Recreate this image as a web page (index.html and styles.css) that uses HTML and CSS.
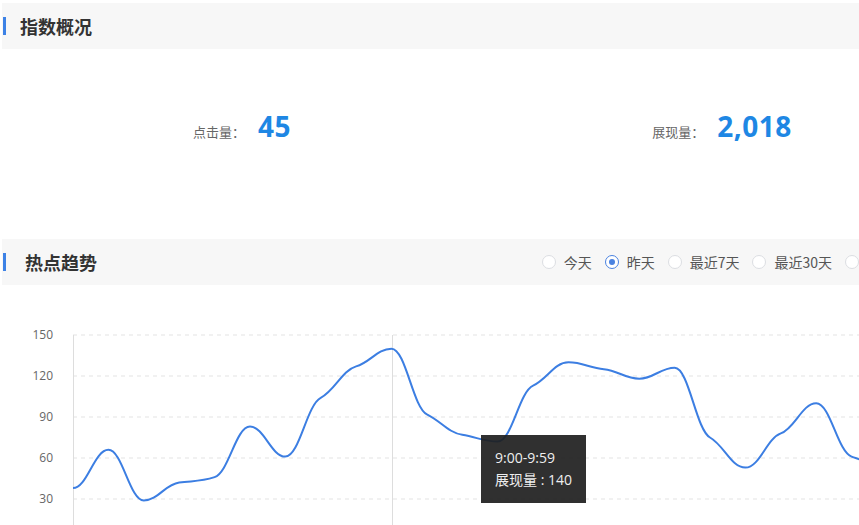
FILE: index.html
```html
<!DOCTYPE html>
<html lang="zh-CN">
<head>
    <meta charset="UTF-8">
    <title>热点数据</title>
    <link rel="stylesheet" href="styles.css">
</head>
<body>
<div id="content">
    <div class="panel-head">
        <h2 class="panel-title">指数概况</h2>
    </div>
    <ul class="stats">
        <li><span class="stat-label">点击量：</span><span class="stat-num">45</span></li>
        <li><span class="stat-label">展现量：</span><span class="stat-num">2,018</span></li>
    </ul>

    <div class="panel-head">
        <h2 class="panel-title title-trend">热点趋势</h2>
        <ul class="range">
            <li><i class="radio"></i>今天</li>
            <li class="on"><i class="radio"></i>昨天</li>
            <li><i class="radio"></i>最近7天</li>
            <li><i class="radio"></i>最近30天</li>
            <li><i class="radio"></i>自定义</li>
        </ul>
    </div>

    <div class="chart">
        <svg id="chart" width="960" height="270">
            <g class="grid">
                <line x1="71" y1="50" x2="885" y2="50"></line>
                <line x1="71" y1="91" x2="885" y2="91"></line>
                <line x1="71" y1="132" x2="885" y2="132"></line>
                <line x1="71" y1="173" x2="885" y2="173"></line>
                <line x1="71" y1="214" x2="885" y2="214"></line>
                <line x1="71" y1="255" x2="885" y2="255"></line>
            </g>
            <g class="axis-label">
                <text x="51" y="54">150</text>
                <text x="51" y="95">120</text>
                <text x="51" y="136">90</text>
                <text x="51" y="177">60</text>
                <text x="51" y="218">30</text>
            </g>
            <line class="axis" x1="71.5" y1="50" x2="71.5" y2="255"></line>
            <line class="cross" x1="390.5" y1="50" x2="390.5" y2="255"></line>
            <path id="line" class="series" d=""></path>
        </svg>
        <div class="tip">
            <p>9:00-9:59</p>
            <p>展现量 : 140</p>
        </div>
    </div>
</div>

<script src="chart.js"></script>
</body>
</html>
```

FILE: styles.css
```css
html,body,ul,p,h2{
    margin: 0;
    padding: 0;
}
html,body{
    overflow: hidden;
    background: #ffffff;
}
body{
    font-family: "Open Sans", "Noto Sans CJK SC", sans-serif;
}
li{
    list-style: none;
}
#content{
    width: 960px;
    margin: 3px 0 0 2px;
}
.panel-head{
    height: 46px;
    background: #f7f7f7;
    display: flex;
    align-items: center;
}
.panel-title{
    display: flex;
    align-items: center;
    font-family: "Noto Sans CJK SC", sans-serif;
    font-size: 18px;
    font-weight: bold;
    color: #333333;
}
.panel-title::before{
    content: "";
    width: 3px;
    height: 18px;
    margin: 0 14px 0 1px;
    background: #3d82e6;
}
.title-trend::before{
    margin-right: 19px;
}

.stats{
    display: flex;
    padding: 61px 0 91px;
}
.stats li{
    width: 50%;
    display: flex;
    justify-content: center;
    align-items: baseline;
    line-height: 32px;
}
.stat-label{
    font-family: "Noto Sans CJK SC", sans-serif;
    font-size: 13px;
    color: #666666;
    margin-right: 13px;
}
.stat-num{
    font-size: 28px;
    font-weight: bold;
    color: #1e87e4;
    letter-spacing: 0.5px;
}

.range{
    margin-left: auto;
    padding-right: 40px;
    display: flex;
    align-items: center;
    font-family: "Noto Sans CJK SC", sans-serif;
    font-size: 14px;
    color: #555555;
}
.range li{
    display: flex;
    align-items: center;
    margin-right: 13px;
}
.radio{
    width: 14px;
    height: 14px;
    box-sizing: border-box;
    border: 1px solid #dcdee2;
    border-radius: 50%;
    background: #ffffff;
    margin-right: 8px;
    display: flex;
    align-items: center;
    justify-content: center;
}
.range .on .radio{
    border-color: #4a82e0;
}
.range .on .radio::after{
    content: "";
    width: 6px;
    height: 6px;
    border-radius: 50%;
    background: #4a82e0;
}

.chart{
    position: relative;
    height: 270px;
}
#chart{
    display: block;
}
.grid line{
    stroke: #e3e3e3;
    stroke-width: 1;
    stroke-dasharray: 4 4;
}
.axis-label text{
    font-family: "Open Sans", sans-serif;
    font-size: 12px;
    fill: #666666;
    text-anchor: end;
}
.axis, .cross{
    stroke: #dddddd;
    stroke-width: 1;
}
.series{
    fill: none;
    stroke: #3c7ee2;
    stroke-width: 2;
    stroke-linejoin: round;
}
.tip{
    position: absolute;
    left: 479px;
    top: 150px;
    padding: 12px 14px;
    background: rgba(30, 30, 30, 0.92);
    color: #eeeeee;
    font-family: "Open Sans", "Noto Sans CJK SC", sans-serif;
    font-size: 14px;
    line-height: 22px;
    white-space: nowrap;
}
```

FILE: chart.js
```js
(function(){
    var data = [38,66,29,42,46,83,61,104,127,140,92,77,72,113,130,125,118,126,75,53,78,100,61,55];
    var left = 71, step = 814/23, bottom = 255, scale = 41/30, k = 0.4;

    var pts = data.map(function(v,i){
        return [left + i*step, bottom - v*scale];
    });

    // tangent at each point, kept flat so every hour shows a small shoulder
    var m = pts.map(function(p,i){
        var prev = pts[i-1], next = pts[i+1];
        if(!prev || !next) return 0;
        var s0 = (p[1]-prev[1])/step, s1 = (next[1]-p[1])/step;
        if(s0*s1 <= 0) return 0;
        return k*(next[1]-prev[1])/(2*step);
    });

    var f = function(n){ return n.toFixed(1); };
    var h = step*0.4;
    var d = 'M' + f(pts[0][0]) + ',' + f(pts[0][1]);
    for(var i = 1; i < pts.length; i++){
        var a = pts[i-1], b = pts[i];
        d += ' C' + f(a[0]+h) + ',' + f(a[1]+m[i-1]*h) +
             ' ' + f(b[0]-h) + ',' + f(b[1]-m[i]*h) +
             ' ' + f(b[0]) + ',' + f(b[1]);
    }
    document.getElementById('line').setAttribute('d', d);
})();
```
